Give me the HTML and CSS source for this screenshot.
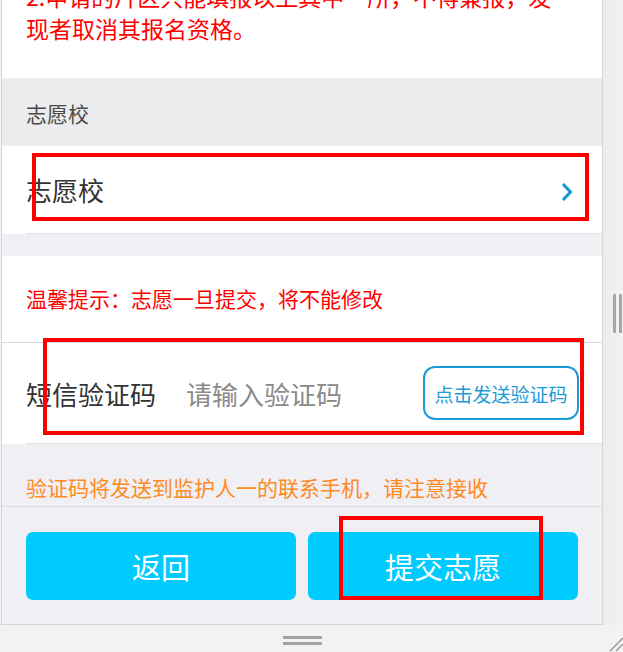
FILE: index.html
```html
<!DOCTYPE html>
<html>
<head>
    <meta charset="utf-8" />
    <title>填报志愿</title>
    <meta name="viewport" content="width=device-width, initial-scale=1">
    <link rel="stylesheet" href="styles.css">
</head>
<body>
    <div class="stage">
        <div class="device">
            <div class="content">
                <div class="notice">2.申请的片区只能填报以上其中一所，不得兼报，发<br>现者取消其报名资格。</div>
                <div class="group-title">志愿校</div>
                <div class="group">
                    <div class="cell cell-link">
                        <span class="cell-label">志愿校</span>
                        <svg class="chevron" width="12" height="20" viewBox="0 0 12 20"><path d="M2 2 L9.5 10 L2 18" fill="none" stroke="#1296db" stroke-width="3"/></svg>
                    </div>
                </div>
                <div class="gap"></div>
                <div class="group group-bordered">
                    <div class="tip">温馨提示：志愿一旦提交，将不能修改</div>
                </div>
                <div class="group">
                    <div class="cell cell-sms">
                        <span class="cell-label">短信验证码</span>
                        <input class="code-input" type="text" placeholder="请输入验证码">
                        <div class="btn-code">点击发送验证码</div>
                    </div>
                </div>
                <div class="sms-hint">验证码将发送到监护人一的联系手机，请注意接收</div>
            </div>
            <div class="footer">
                <div class="btn-main">返回</div>
                <div class="btn-main">提交志愿</div>
            </div>
        </div>
        <div class="side-strip">
            <div class="grip-v"><span></span><span></span></div>
        </div>
    </div>
    <div class="bottom-strip">
        <div class="grip-h"><span></span><span></span></div>
        <svg class="resize-corner" width="14" height="20" viewBox="0 0 14 20"><path d="M1 19 L14 6 M7 19 L14 12" stroke="#9a9a9a" stroke-width="1.5"/></svg>
    </div>

    <!-- screenshot markup boxes -->
    <div class="mark mark-1"></div>
    <div class="mark mark-2"></div>
    <div class="mark mark-3"></div>
</body>
</html>
```

FILE: styles.css
```css
body {
    margin: 0;
    width: 623px;
    height: 652px;
    overflow: hidden;
    position: relative;
    background: #f2f2f2;
    font-family: "Noto Sans CJK SC", "Microsoft YaHei", sans-serif;
}
.stage {
    display: flex;
    height: 625px;
}
.device {
    margin-left: 1px;
    width: 600px;
    height: 624px;
    border: 1px solid #d6d6d6;
    border-top: none;
    background: #fff;
    display: flex;
    flex-direction: column;
}
.content {
    height: 506px;
    overflow: hidden;
}
.notice {
    margin-top: -20px;
    padding: 0 24px 34px;
    font-size: 23px;
    line-height: 32px;
    color: #ff0000;
}
.group-title {
    height: 68px;
    line-height: 70px;
    padding-left: 24px;
    background: #ebecee;
    font-size: 21px;
    color: #4a4a4a;
}
.group {
    padding-left: 24px;
    background: #fff;
}
.group-bordered {
    border-bottom: 1px solid #d8d8d8;
}
.cell {
    display: flex;
    align-items: center;
    border-bottom: 1px solid #e3e3e3;
}
.cell-label {
    font-size: 26px;
    color: #333;
}
.cell-link {
    height: 87px;
    justify-content: space-between;
    padding-right: 29px;
}
.chevron {
    margin-top: 4px;
}
.gap {
    height: 22px;
    background: #efeff4;
}
.tip {
    height: 84px;
    padding-bottom: 2px;
    display: flex;
    align-items: center;
    font-size: 21px;
    color: #ff0000;
}
.cell-sms {
    height: 100px;
    padding-right: 23px;
}
.code-input {
    flex: 1;
    min-width: 0;
    margin-left: 30px;
    border: none;
    outline: none;
    font-family: inherit;
    font-size: 26px;
    color: #333;
    padding: 0;
}
.code-input::placeholder {
    color: #8a8a8a;
}
.btn-code {
    width: 156px;
    height: 54px;
    box-sizing: border-box;
    border: 2px solid #1a9ad6;
    border-radius: 12px;
    display: flex;
    align-items: center;
    justify-content: center;
    font-size: 19px;
    color: #1a9ad6;
}
.sms-hint {
    height: 62px;
    box-sizing: border-box;
    padding: 29px 0 0 24px;
    background: #efeff4;
    font-size: 21px;
    line-height: 28px;
    color: #ff8a1f;
}
.footer {
    flex: 1;
    border-top: 1px solid #dcdcdc;
    background: #efeff4;
    display: flex;
    gap: 12px;
    padding: 25px 24px 0;
}
.btn-main {
    flex: 1;
    height: 68px;
    border-radius: 7px;
    background: #00cbff;
    color: #fff;
    font-size: 29px;
    display: flex;
    align-items: center;
    justify-content: center;
}
.side-strip {
    flex: 1;
    background: linear-gradient(to right, #ececec, #f2f2f2);
    display: flex;
    align-items: center;
}
.grip-v {
    display: flex;
    gap: 3px;
    margin-left: 10px;
    margin-top: 1px;
}
.grip-v span {
    width: 3px;
    height: 39px;
    border-radius: 1px;
    background: #a6a6a6;
}
.bottom-strip {
    height: 27px;
    position: relative;
    display: flex;
    justify-content: center;
    padding-right: 19px;
}
.grip-h {
    display: flex;
    flex-direction: column;
    gap: 3px;
    padding-top: 11px;
}
.grip-h span {
    width: 39px;
    height: 3px;
    border-radius: 1px;
    background: #a2a2a2;
}
.resize-corner {
    position: absolute;
    right: 0;
    bottom: 0;
}
.mark {
    position: absolute;
    box-sizing: border-box;
    border: 4px solid #ff0000;
}
.mark-1 {
    left: 32px;
    top: 153px;
    width: 557px;
    height: 68px;
}
.mark-2 {
    left: 43px;
    top: 338px;
    width: 541px;
    height: 97px;
}
.mark-3 {
    left: 339px;
    top: 516px;
    width: 204px;
    height: 84px;
}
```
